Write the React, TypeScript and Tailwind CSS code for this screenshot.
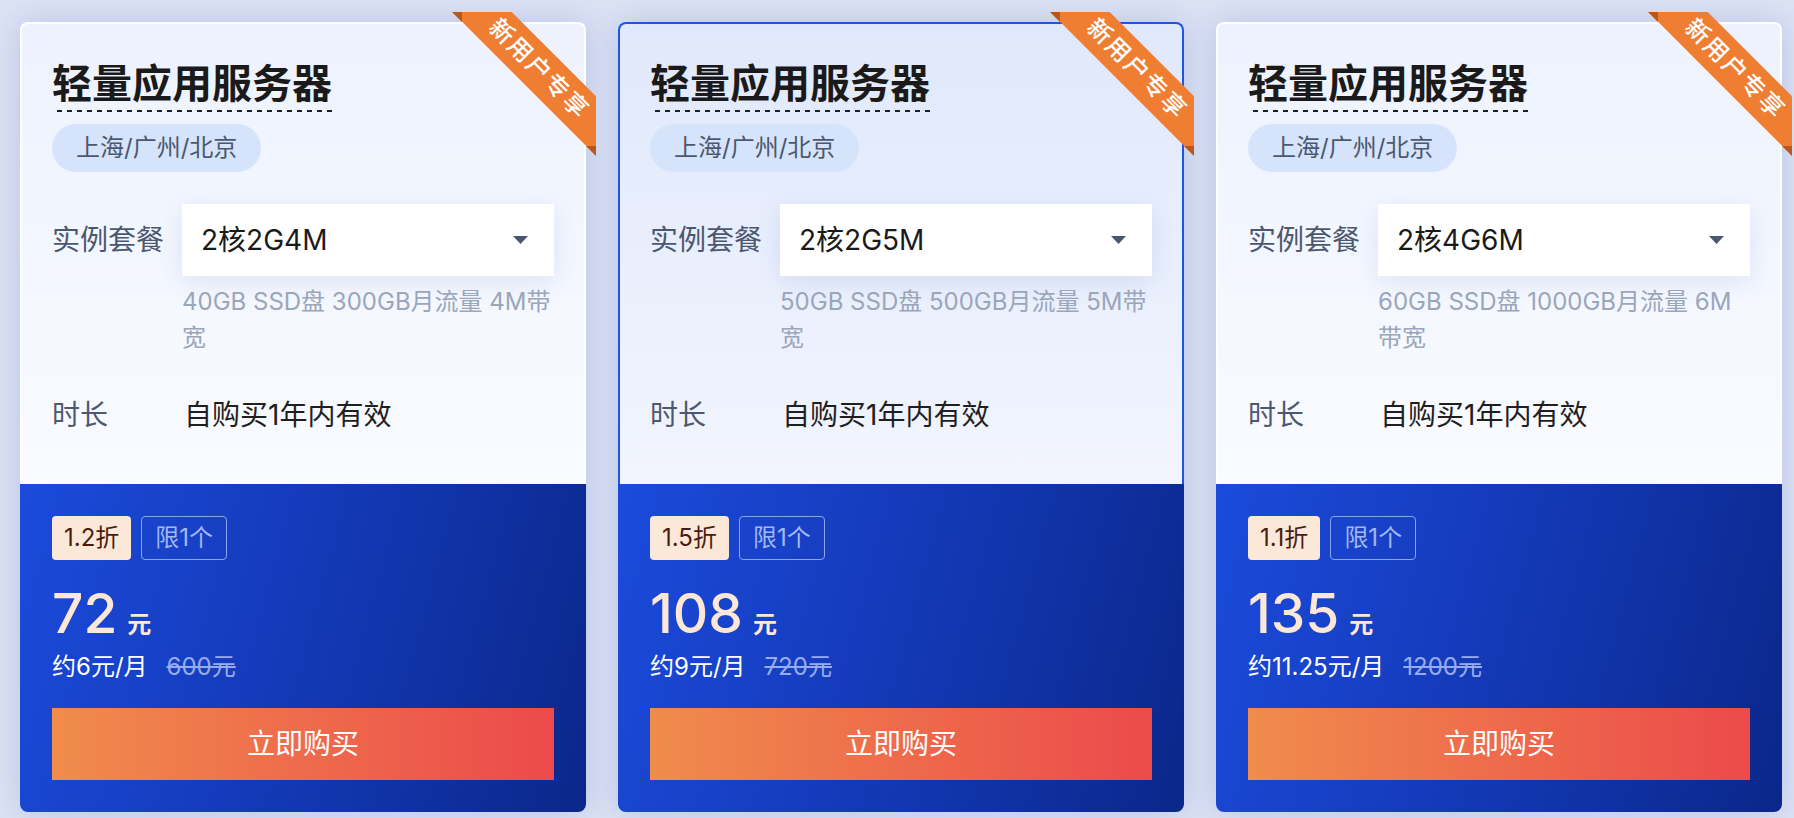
import React from "react";

interface Plan {
  spec: string;
  desc: string;
  discount: string;
  price: string;
  monthly: string;
  original: string;
  active: boolean;
}

const PLANS: Plan[] = [
  {
    spec: "2核2G4M",
    desc: "40GB SSD盘 300GB月流量 4M带宽",
    discount: "1.2折",
    price: "72",
    monthly: "约6元/月",
    original: "600元",
    active: false,
  },
  {
    spec: "2核2G5M",
    desc: "50GB SSD盘 500GB月流量 5M带宽",
    discount: "1.5折",
    price: "108",
    monthly: "约9元/月",
    original: "720元",
    active: true,
  },
  {
    spec: "2核4G6M",
    desc: "60GB SSD盘 1000GB月流量 6M带宽",
    discount: "1.1折",
    price: "135",
    monthly: "约11.25元/月",
    original: "1200元",
    active: false,
  },
];

const Caret = () => (
  <svg width="15" height="8" viewBox="0 0 15 8">
    <path d="M0 0h15L7.5 8z" fill="#4a5670" />
  </svg>
);

function Ribbon() {
  return (
    <div className="pointer-events-none absolute -right-[10px] -top-[10px] z-10 h-[144px] w-[144px] overflow-hidden">
      <div className="absolute left-[-33px] top-[36px] flex h-[42px] w-[240px] rotate-45 items-center justify-center bg-[#ef7d32] text-[24px] font-medium tracking-[2px] text-white">
        新用户专享
      </div>
      {/* folds */}
      <div className="absolute left-0 top-0 h-[10px] w-[10px] bg-[#b9561c] [clip-path:polygon(0_0,100%_0,100%_100%)]" />
      <div className="absolute bottom-0 right-0 h-[10px] w-[10px] bg-[#b9561c] [clip-path:polygon(0_0,100%_0,100%_100%)]" />
    </div>
  );
}

function PlanCard({ p }: { p: Plan }) {
  return (
    <div className="relative flex h-[790px] w-[566px] shrink-0 flex-col rounded-[8px] shadow-[0_0_32px_rgba(86,112,196,0.28)]">
      <Ribbon />

      {/* 配置 */}
      <div
        className={`h-[462px] rounded-t-[8px] border-2 border-b-0 px-[30px] pt-[36px] ${
          p.active
            ? "border-[#1d56e3] bg-[linear-gradient(180deg,#e0e8fb,#f2f5fe)]"
            : "border-white bg-[linear-gradient(180deg,#edf2fe,#f9fbff)]"
        }`}
      >
        <h3 className="w-fit bg-[linear-gradient(90deg,#1f1f1f_55%,transparent_55%)] bg-[length:10px_2px] bg-bottom bg-repeat-x pb-[4px] text-[40px] font-bold leading-[48px] text-[#1a1a1a]">
          轻量应用服务器
        </h3>
        <div className="mt-[12px] flex h-[48px] w-fit items-center rounded-full bg-[#d6e4fb] px-[24px] text-[24px] text-[#4b5870]">
          上海/广州/北京
        </div>

        <div className="mt-[32px] flex">
          <div className="w-[130px] shrink-0 text-[28px] leading-[72px] text-[#4b5870]">实例套餐</div>
          <div className="flex-1">
            <div className="flex h-[72px] items-center justify-between bg-white pl-[19px] pr-[26px] text-[28px] text-[#1a1a1a] shadow-[0_6px_24px_rgba(60,90,170,0.12)]">
              <span>{p.spec}</span>
              <Caret />
            </div>
            <p className="mt-[8px] text-[24px] leading-[36px] text-[#9aa6ba]">{p.desc}</p>
          </div>
        </div>

        <div className="mt-[39px] flex">
          <div className="w-[130px] shrink-0 text-[28px] leading-[40px] text-[#4b5870]">时长</div>
          <div className="pl-[2px] text-[28px] leading-[40px] text-[#1f1f1f]">自购买1年内有效</div>
        </div>
      </div>

      {/* 价格 */}
      <div className="flex-1 rounded-b-[8px] bg-[linear-gradient(105deg,#1b4bdb,#1337b3_55%,#0a2789)] px-[32px] pb-[32px] pt-[32px]">
        <div className="flex gap-[10px]">
          <span className="flex h-[44px] items-center rounded-[4px] bg-[#fce8d8] px-[12px] text-[24px] text-[#4a1c10]">
            {p.discount}
          </span>
          <span className="flex h-[44px] items-center rounded-[4px] border border-[#8aa5ef] px-[13px] text-[24px] text-[#a2b7f4]">
            限1个
          </span>
        </div>
        <div className="mt-[25px] flex h-[56px] items-baseline text-[#fde8d7]">
          <span className="text-[55px] font-medium leading-[56px]">{p.price}</span>
          <span className="ml-[10px] text-[24px] font-bold">元</span>
        </div>
        <div className="mt-[10px] flex items-center text-[24px] leading-[32px]">
          <span className="text-white">{p.monthly}</span>
          <span className="ml-[19px] text-[#97acee] line-through">{p.original}</span>
        </div>
        <button
          type="button"
          className="mt-[25px] flex h-[72px] w-full items-center justify-center bg-[linear-gradient(90deg,#f08c4c,#ec4a4b)] text-[28px] text-white"
        >
          立即购买
        </button>
      </div>
    </div>
  );
}

export default function App() {
  return (
    <div className="flex h-[818px] w-full items-start gap-[32px] overflow-hidden bg-[#dde3f4] pl-[20px] pt-[22px] font-['Inter','Noto_Sans_CJK_SC',sans-serif]">
      {PLANS.map((p) => (
        <PlanCard key={p.spec} p={p} />
      ))}
    </div>
  );
}
